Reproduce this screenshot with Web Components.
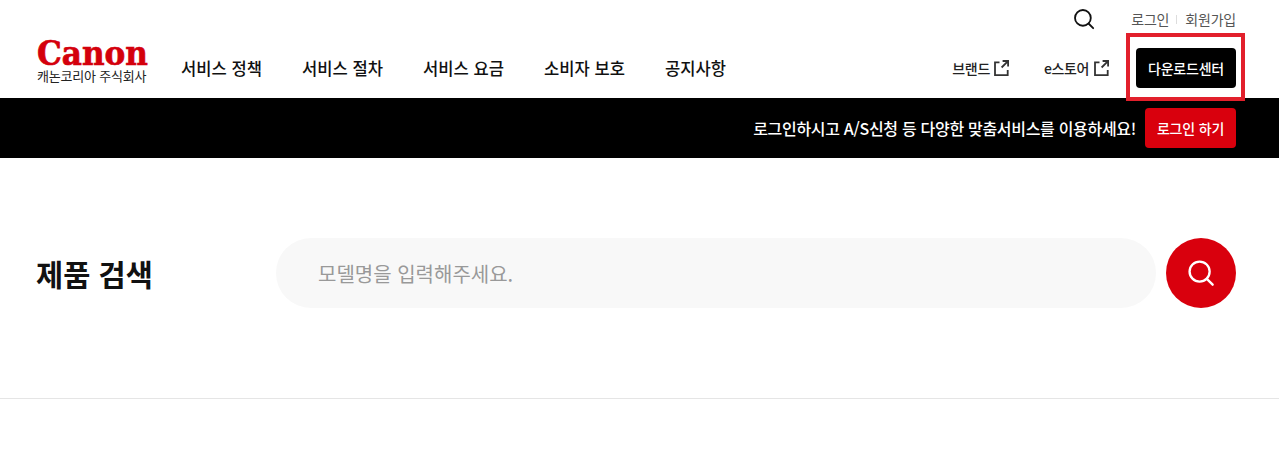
<!DOCTYPE html>
<html lang="ko">
<head>
<meta charset="utf-8">
<title>제품 검색</title>
<style>
  html, body { margin: 0; background: #fff; overflow: hidden; }
  body { font-family: "Noto Sans CJK KR", "Noto Sans", sans-serif; color: #111; }
</style>
</head>
<body>
<site-header>
  <nav-link>서비스 정책</nav-link>
  <nav-link>서비스 절차</nav-link>
  <nav-link>서비스 요금</nav-link>
  <nav-link>소비자 보호</nav-link>
  <nav-link>공지사항</nav-link>
</site-header>
<login-bar>로그인하시고 A/S신청 등 다양한 맞춤서비스를 이용하세요!</login-bar>
<product-search>제품 검색</product-search>

<script>
  const SEARCH_ICON = (size, color, sw) => `
    <svg width="${size}" height="${size}" viewBox="0 0 24 24" fill="none" stroke="${color}" stroke-width="${sw}" stroke-linecap="round">
      <circle cx="10.8" cy="10.8" r="8.6"/><path d="M17.2 17.2 22 22"/>
    </svg>`;
  const EXT_ICON = `
    <svg width="15" height="16" viewBox="0 0 15 16" fill="none" stroke="#333" stroke-width="1.8">
      <path d="M5.5 2.4H1v12.7h12.7V10"/><path d="M8.6 1h5.5v5.5M14 1.1 7.6 7.5"/>
    </svg>`;

  class SiteHeader extends HTMLElement {
    constructor() {
      super();
      this.attachShadow({mode: 'open'}).innerHTML = `
        <style>
          :host { display: block; height: 98px; box-sizing: border-box; padding: 0 43px 0 37px; }
          .util { height: 38px; display: flex; justify-content: flex-end; align-items: center; font-size: 14px; letter-spacing: -.2px; color: #555; }
          .util svg { display: block; margin-right: 36px; }
          .sep { width: 1px; height: 9px; background: #ddd; margin: 0 8px 0 7px; }
          .main { display: flex; align-items: center; height: 60px; }
          .logo { width: 111px; margin-right: 33px; margin-top: -12px; display: flex; flex-direction: column; align-items: flex-start; }
          .logo svg { display: block; margin-bottom: 1px; overflow: visible; }
          .logo text { font: bold 33px "DejaVu Serif", serif; fill: #d4000c; stroke: #d4000c; stroke-width: .7px; }
          .sub { font-size: 13px; line-height: 17px; letter-spacing: -.2px; color: #222; white-space: nowrap; }
          .nav { display: flex; gap: 40px; flex: 1; margin-top: -1px; }
          .ext { display: flex; align-items: center; gap: 4px; font-size: 14px; letter-spacing: -.25px; font-weight: 500; color: #222; margin-right: 35px; }
          .ext + .ext { gap: 5px; margin-right: 27px; letter-spacing: -.4px; }
          .dl { position: relative; width: 100px; height: 40px; box-sizing: border-box; background: #000; color: #fff; border-radius: 4px; font-size: 14px; letter-spacing: -.2px; font-weight: 500; display: flex; align-items: center; justify-content: center; }
          .dl::after { content: ""; position: absolute; left: -10px; right: -9px; top: -15px; bottom: -13px; border: 4px solid #e2202c; }
        </style>
        <div class="util">
          ${SEARCH_ICON(22, '#111', 2)}
          <span>로그인</span><span class="sep"></span><span>회원가입</span>
        </div>
        <div class="main">
          <div class="logo">
            <svg width="111" height="26" viewBox="0 0 111 26"><text x="0" y="25" textLength="111" lengthAdjust="spacingAndGlyphs">Canon</text></svg>
            <span class="sub">캐논코리아 주식회사</span>
          </div>
          <div class="nav"><slot></slot></div>
          <span class="ext">브랜드 ${EXT_ICON}</span>
          <span class="ext">e스토어 ${EXT_ICON}</span>
          <span class="dl">다운로드센터</span>
        </div>`;
    }
  }
  customElements.define('site-header', SiteHeader);

  class NavLink extends HTMLElement {
    constructor() {
      super();
      this.attachShadow({mode: 'open'}).innerHTML = `
        <style>:host { display: block; font-size: 16.6px; font-weight: 500; color: #111; white-space: nowrap; }</style>
        <slot></slot>`;
    }
  }
  customElements.define('nav-link', NavLink);

  class LoginBar extends HTMLElement {
    constructor() {
      super();
      this.attachShadow({mode: 'open'}).innerHTML = `
        <style>
          :host { display: flex; height: 60px; background: #000; color: #fff; align-items: center; justify-content: flex-end; padding-right: 43px; gap: 9px; font-size: 16px; letter-spacing: -.3px; font-weight: 500; }
          .btn { width: 91px; height: 40px; border-radius: 4px; background: #d9000d; display: flex; align-items: center; justify-content: center; font-size: 14px; letter-spacing: -.2px; }
        </style>
        <slot></slot>
        <span class="btn">로그인 하기</span>`;
    }
  }
  customElements.define('login-bar', LoginBar);

  class ProductSearch extends HTMLElement {
    constructor() {
      super();
      this.attachShadow({mode: 'open'}).innerHTML = `
        <style>
          :host { display: flex; align-items: center; box-sizing: border-box; height: 241px; padding: 0 43px 10px 36px; border-bottom: 1px solid #e5e5e5; margin-bottom: 76px; }
          h1 { margin: 0; width: 240px; font-size: 29.5px; font-weight: 700; color: #111; }
          .field { flex: 1; height: 70px; border-radius: 35px; background: #f8f8f8; display: flex; align-items: center; padding-left: 42px; font-size: 20px; color: #999; }
          .go { width: 70px; height: 70px; border-radius: 50%; background: #d9000d; margin-left: 10px; display: flex; align-items: center; justify-content: center; }
        </style>
        <h1><slot></slot></h1>
        <div class="field">모델명을 입력해주세요.</div>
        <div class="go">${SEARCH_ICON(28, '#fff', 2)}</div>`;
    }
  }
  customElements.define('product-search', ProductSearch);
</script>
</body>
</html>
